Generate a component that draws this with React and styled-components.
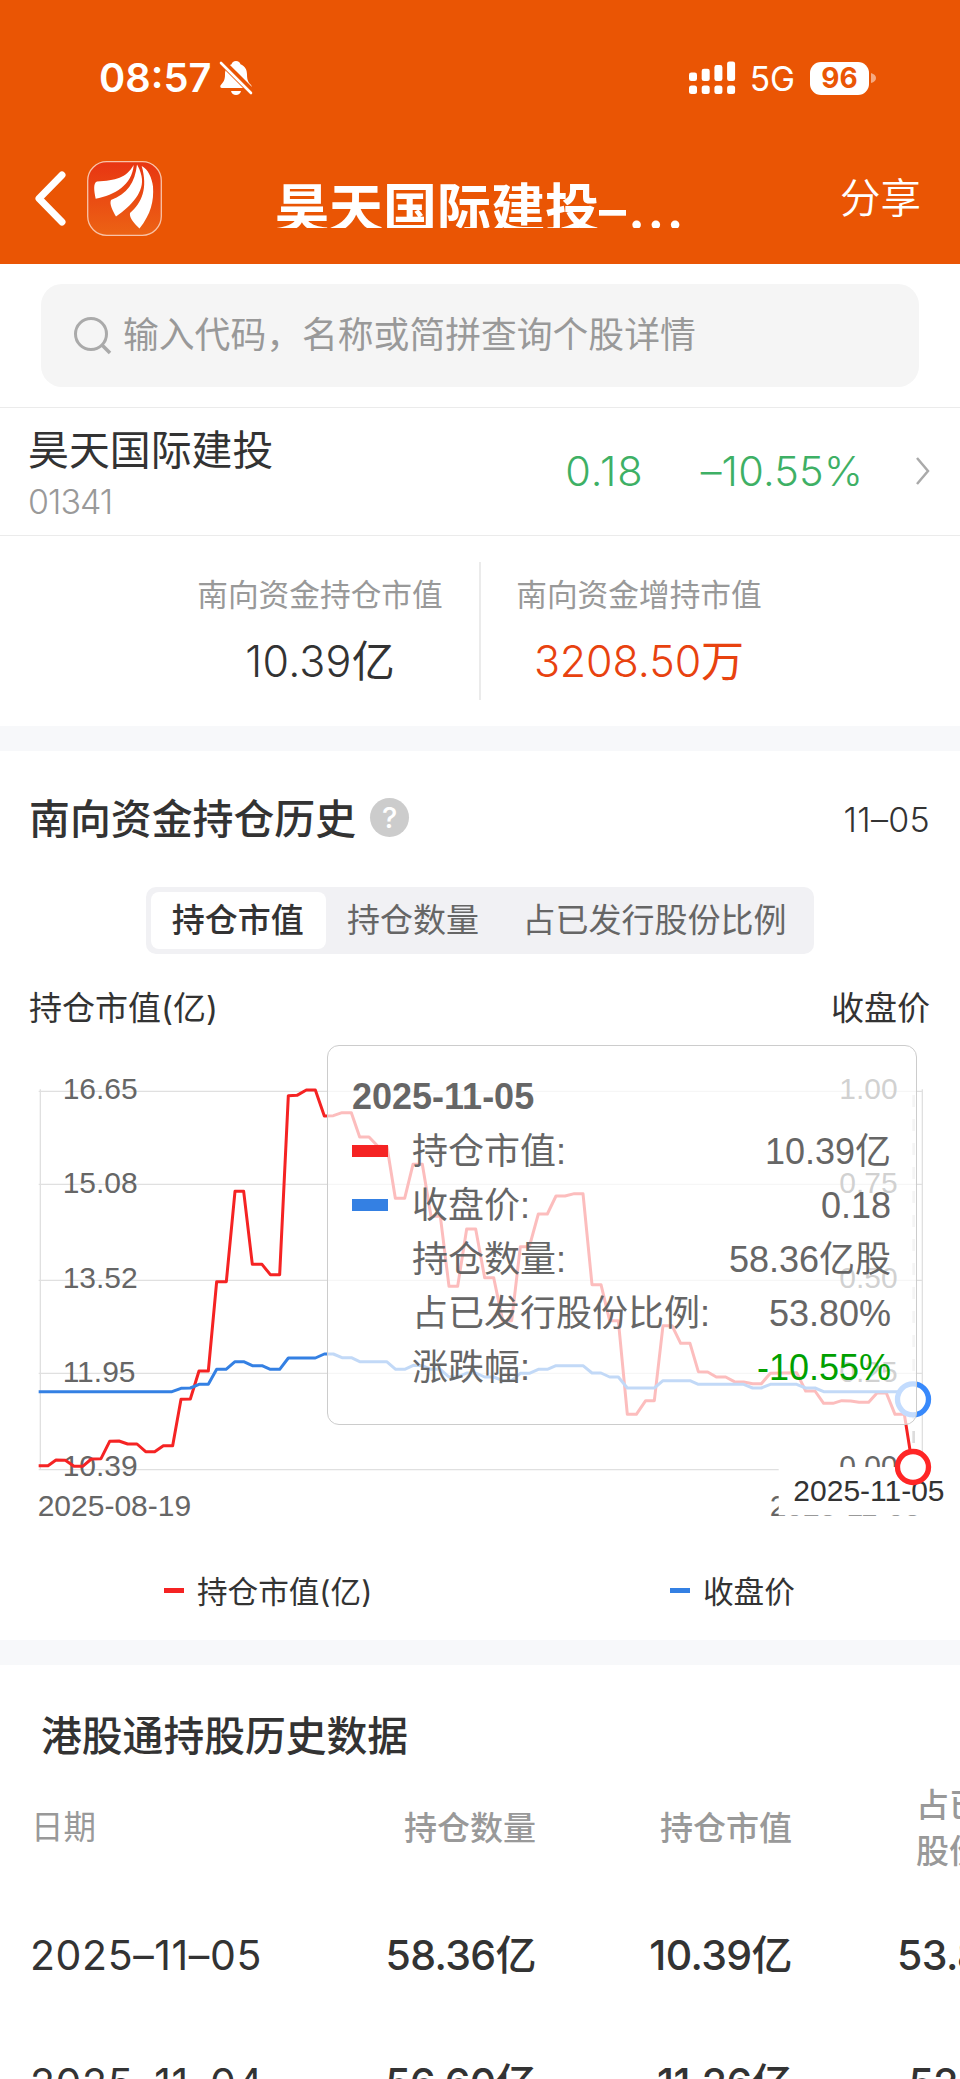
import React from "react";
import styled, { createGlobalStyle } from "styled-components";

const Global = createGlobalStyle`
  body { margin: 0; background: #fff; }
  * { box-sizing: border-box; }
`;

const Page = styled.main`
  width: 960px;
  height: 2079px;
  overflow: hidden;
  background: #fff;
  color: #333;
  font-family: Inter, "Noto Sans CJK SC", sans-serif;
  line-height: 1.2;
  white-space: nowrap;
`;

const Text = styled.span`
  display: block;
  font-size: ${(p) => p.$size}px;
  font-weight: ${(p) => p.$weight || 400};
  color: ${(p) => p.$color || "inherit"};
  letter-spacing: ${(p) => p.$track || 0}px;
`;

const Unit = styled.span`
  font-weight: 400;
  letter-spacing: 0;
`;

const Header = styled.header`
  height: 264px;
  background: #ea5504;
  color: #fff;
`;

const StatusBar = styled.div`
  height: 156px;
  padding: 0 84px 0 99px;
  display: flex;
  align-items: center;
`;

const MutedBell = styled.svg`
  margin-left: 8px;
`;

const StatusRight = styled.div`
  margin-left: auto;
  display: flex;
  align-items: center;
`;

const Network = styled(Text)`
  margin: 2px 0 0 14px;
`;

const Battery = styled.div`
  width: 59px;
  height: 33px;
  margin-left: 15px;
  border-radius: 11px;
  background: #fff;
  color: #ea5504;
  font-size: 28px;
  line-height: 33px;
  font-weight: 700;
  text-align: center;
`;

const Nav = styled.nav`
  height: 84px;
  padding: 0 39px 0 34px;
  display: flex;
  align-items: center;
`;

const AppIcon = styled.svg`
  margin-left: 20px;
`;

const Title = styled.h1`
  margin: 0 0 0 113px;
  height: 60px;
  line-height: 84px;
  overflow: hidden;
  font-size: 54px;
  font-weight: 600;
`;

const TitleTail = styled.span`
  letter-spacing: 2px;
`;

const Share = styled.span`
  margin-left: auto;
  padding-top: 2px;
  font-size: 40.5px;
  font-weight: 350;
`;

const SearchArea = styled.div`
  height: 144px;
  padding: 20px 41px 0;
  border-bottom: 1px solid #ebebeb;
`;

const SearchBox = styled.div`
  height: 103px;
  border-radius: 21px;
  background: #f5f5f5;
  color: #999;
  display: flex;
  align-items: center;
  padding-left: 32px;
  gap: 11px;
`;

const StockRow = styled.div`
  height: 128px;
  padding: 0 28px;
  border-bottom: 1px solid #ebebeb;
  display: flex;
  align-items: center;
`;

const StockName = styled.div`
  display: flex;
  flex-direction: column;
  line-height: 52px;
  margin-top: 8px;
`;

const Quote = styled.div`
  margin-left: auto;
  display: flex;
  align-items: center;
  color: #3eb065;
`;

const Change = styled(Text)`
  margin: 0 49px 0 57px;
`;

const Summary = styled.div`
  height: 190px;
  padding: 26px 2px 0 0;
  display: flex;
  justify-content: center;
  line-height: 66px;
`;

const SummaryCell = styled.div`
  width: 318px;
  height: 138px;
  display: flex;
  flex-direction: column;
  align-items: center;
  & + & { border-left: 2px solid #ebebeb; }
`;

const Band = styled.div`
  height: 25px;
  background: #f7f8fa;
`;

const HistorySection = styled.section`
  height: 889px;
`;

const SectionHead = styled.div`
  height: 136px;
  padding: 2px 30px 0 29px;
  display: flex;
  align-items: center;
  justify-content: space-between;
`;

const HeadTitle = styled.div`
  display: flex;
  align-items: center;
  gap: 14px;
`;

const Help = styled.span`
  width: 39px;
  height: 39px;
  margin-top: -5px;
  border-radius: 50%;
  background: #ccc;
  color: #fff;
  font-size: 29px;
  font-weight: 500;
  line-height: 39px;
  text-align: center;
`;

const Tabs = styled.div`
  width: 668px;
  height: 67px;
  margin: 0 auto;
  padding: 5px;
  border-radius: 10px;
  background: #f1f1f4;
  display: flex;
`;

const Tab = styled.div`
  flex: ${(p) => p.$w} 0 0;
  padding-right: 2px;
  border-radius: 8px;
  background: ${(p) => (p.$active ? "#fff" : "transparent")};
  color: ${(p) => (p.$active ? "#333" : "#666")};
  font-weight: ${(p) => (p.$active ? 500 : 400)};
  font-size: 33px;
  line-height: 57px;
  text-align: center;
`;

const AxisTitles = styled.div`
  height: 76px;
  padding: 31px 30px 0 29px;
  line-height: 46px;
  display: flex;
  justify-content: space-between;
  font-size: 33px;
`;

const ChartBox = styled.div`
  position: relative;
  height: 500px;
  font-family: "Liberation Sans", "Noto Sans CJK SC", sans-serif;
`;

const Plot = styled.svg`
  display: block;
`;

const Tooltip = styled.div`
  position: absolute;
  left: 327px;
  top: 15px;
  width: 590px;
  height: 380px;
  padding: 24px 25px 0 24px;
  border: 1px solid #ccc;
  border-radius: 12px;
  background: rgba(255, 255, 255, 0.7);
  color: #666;
  font-size: 36px;
  line-height: 54px;
`;

const TipTitle = styled.b`
  display: block;
`;

const TipRow = styled.div`
  height: 54px;
  display: flex;
  align-items: center;
`;

const Swatch = styled.i`
  width: 36px;
  height: 12px;
  margin-right: 24px;
  background: ${(p) => p.$color};
`;

const TipLabel = styled.span`
  padding-top: 2px;
`;

const TipValue = styled.span`
  margin-left: auto;
  padding-top: 2px;
  color: ${(p) => p.$color || "inherit"};
`;

const Legend = styled.div`
  height: 110px;
  padding: 14px 0 0 164px;
  display: flex;
  align-items: center;
`;

const LegendItem = styled.div`
  flex: none;
  width: 506px;
  display: flex;
  align-items: center;
  gap: 13px;
  font-size: 30.6px;
  &:last-child { width: auto; }
  &::before {
    content: "";
    width: 20px;
    height: 5px;
    margin-top: -2px;
    background: ${(p) => p.$color};
  }
`;

const TableTitle = styled.h2`
  margin: 0;
  padding: 41px 0 0 41px;
  height: 100px;
  font-size: 40.8px;
  line-height: 60px;
  font-weight: 500;
`;

const Row = styled.div`
  width: 1048px;
  height: ${(p) => p.$h}px;
  display: grid;
  grid-template-columns: 280px 256px 256px 256px;
  align-items: center;
  font-size: ${(p) => p.$size}px;
  line-height: 46px;
  font-weight: 500;
  letter-spacing: ${(p) => p.$track || 0}px;
  color: ${(p) => p.$color};
  text-align: right;
  & > :first-child {
    padding-left: 30px;
    text-align: left;
    font-weight: 370;
    letter-spacing: 0.6px;
  }
`;

const HeadRow = styled(Row)`
  & > :first-child {
    padding-left: 31px;
    font-size: 32.5px;
    font-weight: 400;
    letter-spacing: 0;
  }
`;

const GRID_Y = [184, 463, 751, 1030, 1319];
const LEFT_LABELS = ["16.65", "15.08", "13.52", "11.95", "10.39"];
const RIGHT_LABELS = ["1.00", "0.75", "0.50", "0.25", "0.00"];
const LABEL_Y = [207, 490, 773, 1056, 1339];

const RED =
  "116,1307 144,1307 168,1290 196,1291 222,1309 248,1309 274,1287 303,1286 329,1234 357,1233 383,1242 411,1242 437,1265 464,1265 490,1247 518,1247 543,1108 571,1107 597,1023 625,1023 650,755 679,755 705,484 731,484 757,703 786,703 811,734 839,734 865,197 891,196 919,180 946,180 973,258 1000,257 1026,248 1054,248 1079,321 1107,321 1133,348 1161,350 1186,505 1214,505 1239,403 1267,403 1293,559 1321,559 1347,769 1373,769 1400,597 1427,597 1454,743 1481,743 1508,872 1535,872 1561,650 1588,650 1615,552 1642,552 1668,498 1695,498 1723,491 1749,491 1776,764 1803,764 1829,872 1855,872 1882,1153 1909,1153 1937,1112 1963,1112 1989,887 2016,887 2042,940 2070,940 2095,1025 2123,1026 2149,1041 2177,1041 2203,1055 2231,1056 2258,1061 2284,1061 2311,1030 2390,1028 2417,1083 2445,1083 2471,1120 2499,1120 2525,1112 2552,1113 2577,1117 2606,1117 2631,1089 2659,1089 2685,1153 2713,1153 2738,1311";
const BLUE =
  "116,1085 516,1085 543,1075 571,1074 597,1063 625,1063 650,1018 678,1018 705,995 731,995 757,1007 786,1007 811,1018 839,1018 865,984 946,984 973,972 1000,972 1026,983 1054,983 1079,995 1160,995 1187,1018 1214,1018 1240,1006 1267,1007 1293,1018 1321,1018 1347,1041 1373,1041 1400,1029 1427,1029 1454,1041 1481,1041 1508,1052 1535,1052 1561,1030 1588,1030 1615,1018 1642,1018 1668,1007 1749,1007 1776,1029 1803,1029 1829,1041 1855,1041 1882,1074 1963,1074 1989,1052 2070,1052 2095,1063 2231,1063 2258,1074 2284,1074 2311,1063 2390,1063 2417,1074 2445,1074 2471,1085 2713,1085 2738,1108";

const TIP = [
  ["持仓市值:", "10.39亿", "#f52323"],
  ["收盘价:", "0.18", "#3480e3"],
  ["持仓数量:", "58.36亿股", "transparent"],
  ["占已发行股份比例:", "53.80%", "transparent"],
  ["涨跌幅:", "-10.55%", "transparent", "#00a000"],
];

function Chart() {
  return (
    <ChartBox>
      <Plot width="960" height="500" viewBox="0 0 2880 1500">
        <g stroke="#e0e0e0" strokeWidth="4">
          {GRID_Y.map((y) => (
            <line key={y} x1="116" x2="2767" y1={y} y2={y} />
          ))}
          <line x1="121" x2="121" y1="178" y2="1319" />
          <line x1="2767" x2="2767" y1="178" y2="1319" />
        </g>
        <g fill="#666" fontSize="90">
          {LABEL_Y.map((y, i) => (
            <React.Fragment key={y}>
              <text x="188" y={y}>{LEFT_LABELS[i]}</text>
              <text x="2693" y={y} textAnchor="end">{RIGHT_LABELS[i]}</text>
            </React.Fragment>
          ))}
          <text x="113" y="1457">2025-08-19</text>
          <text x="2309" y="1457">2025-11-05</text>
        </g>
        <g fill="none" strokeWidth="9" strokeLinejoin="round">
          <polyline points={RED} stroke="#f52323" />
          <polyline points={BLUE} stroke="#3480e3" />
        </g>
        <line x1="2741" x2="2741" y1="195" y2="1311" stroke="#ddd" strokeWidth="8" strokeDasharray="36 36" />
        <rect x="2336" y="1311" width="544" height="145" fill="#fff" />
        <text x="2380" y="1413" fontSize="90" fill="#333">2025-11-05</text>
        <g fill="#fff" strokeWidth="16">
          <circle cx="2739" cy="1108" r="46.5" stroke="#3889fb" />
          <circle cx="2739" cy="1311" r="46.5" stroke="#ff2626" />
        </g>
      </Plot>
      <Tooltip>
        <TipTitle>2025-11-05</TipTitle>
        {TIP.map(([label, value, swatch, color]) => (
          <TipRow key={label}>
            <Swatch $color={swatch} />
            <TipLabel>{label}</TipLabel>
            <TipValue $color={color}>{value}</TipValue>
          </TipRow>
        ))}
      </Tooltip>
    </ChartBox>
  );
}

export default function App() {
  return (
    <Page>
      <Global />
      <Header>
        <StatusBar>
          <Text $size={39.8} $weight={600}>08:57</Text>
          <MutedBell width="34" height="36" viewBox="0 0 34 36" fill="#fff">
            <path d="M17 1c2.500 0 4 1.500 4.500 3.300 4.500 1.700 6.500 5.500 6.500 10.200 0 6 1.500 8 4 10.500 1.200 1.300.6 3-1 3H3c-1.800 0-2.300-1.800-1-3.200C4.500 22 6 20 6 14.500 6 9.500 8.300 6 12.500 4.300 13 2.500 14.500 1 17 1z" />
            <path d="M12 31h10c-.6 2.500-2.500 4-5 4s-4.400-1.500-5-4z" />
            <path d="M2 1 33 32" stroke="#ea5504" strokeWidth="7" />
            <path d="M2 3 32 33" stroke="#fff" strokeWidth="2.600" strokeLinecap="round" />
          </MutedBell>
          <StatusRight>
            <svg width="47" height="34" fill="#fff">
              {[0, 1, 2, 3].map((i) => (
                <React.Fragment key={i}>
                  <rect x={i * 12.7} y={11.5 - i * 3.7} width="8" height={8.5 + i * 3.7} rx="2.300" />
                  <rect x={i * 12.7} y="24.500" width="8" height="8.500" rx="2.500" />
                </React.Fragment>
              ))}
            </svg>
            <Network $size={33.5}>5G</Network>
            <Battery>96</Battery>
            <svg width="7" height="12"><path d="M2 1q5 1.500 5 5t-5 5z" fill="#f5aa82" /></svg>
          </StatusRight>
        </StatusBar>
        <Nav>
          <svg width="33" height="56" fill="none" stroke="#fff" strokeWidth="7" strokeLinecap="round" strokeLinejoin="round">
            <path d="M28 5 5 28.500 28 52" />
          </svg>
          <AppIcon width="75" height="75" viewBox="0 0 75 75">
            <defs>
              <linearGradient id="brand" x1="0" y1="0" x2="0" y2="1">
                <stop offset="0" stopColor="#e83512" />
                <stop offset="1" stopColor="#ec6314" />
              </linearGradient>
            </defs>
            <rect x=".7" y=".7" width="73.600" height="73.600" rx="19" fill="url(#brand)" stroke="#f9c3a8" strokeWidth="1.300" />
            <g fill="#fff">
              <path d="M46.700 4C39 17 29 19.500 10 20.500 6 22 7 30 8.700 37.700 28 34 45 24 46.700 4z" />
              <path d="M50 3.500C48 22 40 33 24 39c-2 4 2 11 5 16.500C44 45 58 31 54.500 15 53.500 10 51.500 6 50 3.500z" />
              <path d="M54.700 5C61 27 55 42 43 52c-1 5 5 11 9.500 15.500C64 53 67 40 66 25.500 65 17 61 8 54.700 5z" />
            </g>
          </AppIcon>
          <Title>昊天国际建投<TitleTail>–...</TitleTail></Title>
          <Share>分享</Share>
        </Nav>
      </Header>

      <SearchArea>
        <SearchBox>
          <svg width="39" height="39" fill="none" stroke="#aaa" strokeWidth="3">
            <circle cx="18" cy="18" r="15.500" />
            <path d="m29 29 8 8" strokeWidth="3.500" />
          </svg>
          <Text $size={35.8}>输入代码，名称或简拼查询个股详情</Text>
        </SearchBox>
      </SearchArea>

      <StockRow>
        <StockName>
          <Text $size={40.9}>昊天国际建投</Text>
          <Text $size={34} $color="#999" $weight={360} $track={-1}>01341</Text>
        </StockName>
        <Quote>
          <Text $size={41.5} $weight={360} $track={1}>0.18</Text>
          <Change $size={41.5} $weight={360} $track={0.2}>–10.55%</Change>
          <svg width="20" height="28" fill="none" stroke="#aaa" strokeWidth="2.500">
            <path d="M5 1 16 14 5 27" />
          </svg>
        </Quote>
      </StockRow>

      <Summary>
        <SummaryCell>
          <Text $size={30.7} $color="#999">南向资金持仓市值</Text>
          <Text $size={43} $weight={360} $track={0.2}>10.39<Unit>亿</Unit></Text>
        </SummaryCell>
        <SummaryCell>
          <Text $size={30.7} $color="#999">南向资金增持市值</Text>
          <Text $size={43} $weight={360} $color="#e8420f" $track={-0.1}>3208.50<Unit>万</Unit></Text>
        </SummaryCell>
      </Summary>
      <Band />

      <HistorySection>
        <SectionHead>
          <HeadTitle>
            <Text $size={40.9} $weight={500}>南向资金持仓历史</Text>
            <Help>?</Help>
          </HeadTitle>
          <Text $size={34} $weight={360} $track={0.3}>11–05</Text>
        </SectionHead>
        <Tabs>
          <Tab $w={175} $active>持仓市值</Tab>
          <Tab $w={175}>持仓数量</Tab>
          <Tab $w={308}>占已发行股份比例</Tab>
        </Tabs>
        <AxisTitles>
          <span>持仓市值(亿)</span>
          <span>收盘价</span>
        </AxisTitles>
        <Chart />
        <Legend>
          <LegendItem $color="#f52323">持仓市值(亿)</LegendItem>
          <LegendItem $color="#3480e3">收盘价</LegendItem>
        </Legend>
      </HistorySection>
      <Band />

      <section>
        <TableTitle>港股通持股历史数据</TableTitle>
        <HeadRow $h={126} $size={33} $color="#999">
          <span>日期</span>
          <span>持仓数量</span>
          <span>持仓市值</span>
          <span>占已发行<br />股份比例</span>
        </HeadRow>
        <Row $h={128} $size={41} $color="#333" $track={-0.6}>
          <span>2025–11–05</span>
          <span>58.36亿</span>
          <span>10.39亿</span>
          <span>53.80%</span>
        </Row>
        <Row $h={128} $size={41} $color="#333" $track={-0.6}>
          <span>2025–11–04</span>
          <span>56.60亿</span>
          <span>11.26亿</span>
          <span>52.18%</span>
        </Row>
      </section>
    </Page>
  );
}
